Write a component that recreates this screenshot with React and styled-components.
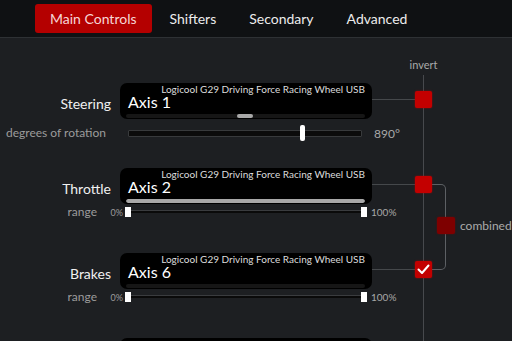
import React from 'react';
import styled, { createGlobalStyle } from 'styled-components';

const Global = createGlobalStyle`
  html, body { margin: 0; padding: 0; background: #1d1f22; }
  body { font-family: Lato, "Noto Sans", sans-serif; overflow: hidden; }
  * { box-sizing: border-box; }
`;

const Page = styled.div`
  width: 512px;
  height: 341px;
  overflow: hidden;
  background: #1d1f22;
  display: flex;
  flex-direction: column;
`;

const TopBar = styled.div`
  height: 38px;
  flex: none;
  background: #0f1113;
  border-bottom: 1px solid #2e3134;
  display: flex;
  align-items: flex-start;
  padding: 4px 0 0 35px;
  gap: 3px;
`;

const Tab = styled.div`
  height: 29px;
  padding: 0 15px;
  display: flex;
  align-items: center;
  font-size: 14px;
  border-radius: 3px;
  color: ${p => (p.$active ? '#f6d6d6' : '#ececec')};
  background: ${p => (p.$active ? '#b40000' : 'transparent')};
`;

const Content = styled.div`
  position: relative;
  flex: 1;
  padding-top: 20px;
  &::before {
    content: '';
    position: absolute;
    left: 423px;
    top: 37px;
    bottom: 0;
    width: 1px;
    background: #47494d;
  }
`;

const Columns = styled.div`
  display: grid;
  grid-template-columns: 120px 252px 43px 17px;
  align-items: start;
`;

const HeaderRow = styled(Columns)`
  height: 14px;
  margin-bottom: 11px;
`;

const HeaderCell = styled.div`
  grid-column: 4;
  display: flex;
  justify-content: center;
  white-space: nowrap;
  font-size: 11px;
  line-height: 14px;
  color: #a9a9a9;
`;

const Group = styled.div`
  height: 85px;
  display: flex;
  flex-direction: column;
`;

const Label = styled.div`
  text-align: right;
  padding-right: 9px;
  margin-top: 13px;
  font-size: 14px;
  line-height: 16px;
  color: #f0f0f0;
`;

const DeviceBox = styled.div`
  height: 36px;
  background: #000;
  border-radius: 7px;
  display: flex;
  flex-direction: column;
  padding: 0 7px 1px 6px;
`;

const DeviceName = styled.div`
  font-size: 10px;
  line-height: 10px;
  margin-top: 1px;
  color: #dcdcdc;
  text-align: right;
  white-space: nowrap;
`;

const AxisName = styled.div`
  font-size: 16px;
  line-height: 16px;
  padding-left: 2px;
  color: #fff;
`;

const AxisBar = styled.div`
  margin-top: 4px;
  height: 5px;
  border-radius: 3px;
  background: #161616;
  position: relative;
  overflow: hidden;
`;

const AxisFill = styled.div`
  position: absolute;
  top: 0;
  bottom: 0;
  border-radius: 3px;
  background: #a8a8a8;
`;

const Connector = styled.div`
  margin-top: 16px;
  height: 1px;
  background: #45484b;
`;

const Check = styled.div`
  width: 17px;
  height: 17px;
  margin-top: 8px;
  border-radius: 2px;
  background: ${p => (p.$dim ? '#7e0000' : '#c30000')};
  box-shadow: 0 0 2px ${p => (p.$dim ? 'rgba(126,0,0,0.7)' : 'rgba(200,0,0,0.7)')};
  position: relative;
  z-index: 1;
  display: flex;
  align-items: center;
  justify-content: center;
`;

const RotRow = styled.div`
  display: flex;
  align-items: center;
  height: 16px;
  margin-top: 6px;
`;

const SubLabel = styled.div`
  width: ${p => p.$w}px;
  padding-right: ${p => p.$pr || 0}px;
  text-align: right;
  font-size: 12px;
  line-height: 12px;
  color: #9c9c9c;
  white-space: nowrap;
`;

const RotTrack = styled.div`
  margin-left: 8px;
  width: 234px;
  height: 7px;
  background: #0b0b0b;
  border: 1px solid #383a3c;
  border-radius: 1px;
  position: relative;
`;

const RotThumb = styled.div`
  position: absolute;
  top: -6px;
  width: 5px;
  height: 16px;
  border-radius: 2px;
  background: #fff;
`;

const Value = styled.div`
  margin-left: ${p => p.$ml}px;
  font-size: ${p => p.$fs}px;
  color: #a8a8a8;
  white-space: nowrap;
`;

const RangeRow = styled.div`
  display: flex;
  align-items: center;
  height: 12px;
  margin-top: 2px;
`;

const RangeMin = styled.div`
  width: 26px;
  text-align: right;
  font-size: 9px;
  color: #9c9c9c;
`;

const RangeSlider = styled.div`
  margin-left: 2px;
  width: 242px;
  height: 12px;
  position: relative;
`;

const RangeTrack = styled.div`
  position: absolute;
  left: 3px;
  right: 3px;
  top: 4px;
  height: 3px;
  background: #0a0a0a;
  border-top: 1px solid #3a3c3f;
`;

const RangeHandle = styled.div`
  position: absolute;
  top: 1px;
  width: 6px;
  height: 10px;
  background: #fff;
  ${p => (p.$right ? 'right: 0;' : 'left: 0;')}
`;

const Bracket = styled.div`
  position: absolute;
  left: 432px;
  top: 146px;
  width: 14px;
  height: 86px;
  border: 1px solid #5d6064;
  border-left: none;
  border-radius: 0 5px 5px 0;
`;

const Combined = styled.div`
  position: absolute;
  left: 437px;
  top: 179px;
  display: flex;
  align-items: center;
  gap: 5px;
  z-index: 1;
`;

const CombinedCheck = styled(Check)`
  width: 18px;
  margin-top: 0;
`;

const CombinedLabel = styled.div`
  font-size: 12px;
  color: #ababab;
`;

const DEVICE = 'Logicool G29 Driving Force Racing Wheel USB';

function CheckMark() {
  return (
    <svg width="17" height="17" viewBox="0 0 17 17">
      <polyline points="3.5,8.5 7,12 13.5,4.5" fill="none" stroke="#fff" strokeWidth="2" strokeLinecap="round" strokeLinejoin="round" />
    </svg>
  );
}

function Range() {
  return (
    <RangeRow>
      <SubLabel $w={97}>range</SubLabel>
      <RangeMin>0%</RangeMin>
      <RangeSlider>
        <RangeTrack />
        <RangeHandle />
        <RangeHandle $right />
      </RangeSlider>
      <Value $ml={4} $fs={10}>100%</Value>
    </RangeRow>
  );
}

function AxisGroup({ label, axis, fill, checked, children }) {
  return (
    <Group>
      <Columns>
        <Label>{label}</Label>
        <DeviceBox>
          <DeviceName>{DEVICE}</DeviceName>
          <AxisName>{axis}</AxisName>
          <AxisBar>{fill && <AxisFill style={fill} />}</AxisBar>
        </DeviceBox>
        <Connector />
        <Check>{checked && <CheckMark />}</Check>
      </Columns>
      {children}
    </Group>
  );
}

export default function App() {
  return (
    <Page>
      <Global />
      <TopBar>
        <Tab $active>Main Controls</Tab>
        <Tab>Shifters</Tab>
        <Tab>Secondary</Tab>
        <Tab>Advanced</Tab>
      </TopBar>
      <Content>
        <HeaderRow>
          <HeaderCell>invert</HeaderCell>
        </HeaderRow>
        <AxisGroup label="Steering" axis="Axis 1" fill={{ left: '111px', width: '16px' }}>
          <RotRow>
            <SubLabel $w={120} $pr={14}>degrees of rotation</SubLabel>
            <RotTrack>
              <RotThumb style={{ left: '171px' }} />
            </RotTrack>
            <Value $ml={12} $fs={12}>890°</Value>
          </RotRow>
        </AxisGroup>
        <AxisGroup label="Throttle" axis="Axis 2" fill={{ left: 0, right: 0 }}>
          <Range />
        </AxisGroup>
        <AxisGroup label="Brakes" axis="Axis 6" checked>
          <Range />
        </AxisGroup>
        <Group>
          <Columns>
            <div />
            <DeviceBox />
          </Columns>
        </Group>
        <Bracket />
        <Combined>
          <CombinedCheck $dim />
          <CombinedLabel>combined</CombinedLabel>
        </Combined>
      </Content>
    </Page>
  );
}
